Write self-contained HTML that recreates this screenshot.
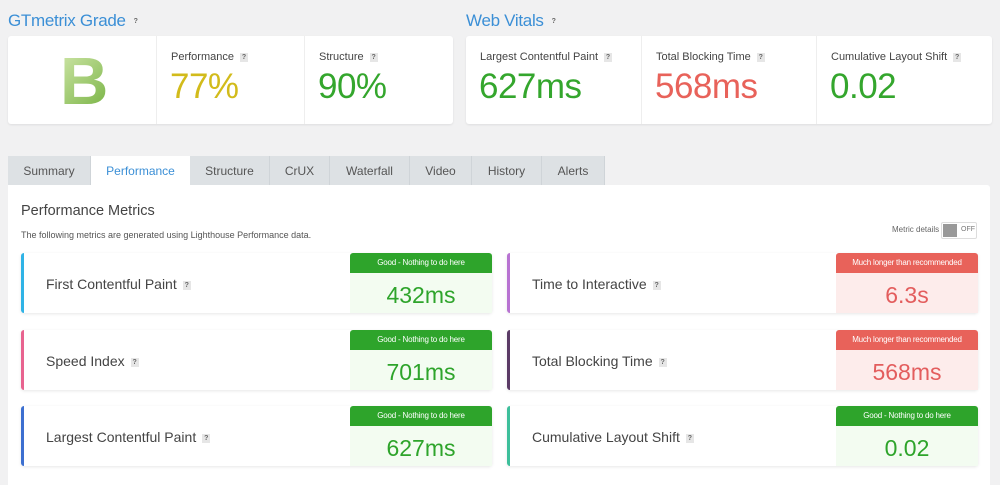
<!DOCTYPE html>
<html><head><style>
*{margin:0;padding:0;box-sizing:border-box}
body{width:1000px;height:477px;background:#f1f1f2;font-family:"Liberation Sans",sans-serif;position:relative;overflow:hidden;color:#444}
.a{position:absolute}
.h{color:#3b8fd6;font-size:17px;letter-spacing:-0.3px}
.q{display:inline-block;width:8px;height:9px;background:#e6e6e6;color:#666;font-size:7px;line-height:9px;text-align:center;font-weight:bold;vertical-align:middle;margin-left:6px}
.card{background:#fff;border-radius:3px;box-shadow:0 1px 2px rgba(0,0,0,.08)}
.sec{position:absolute;top:0;height:88px;border-left:1px solid #eee}
.lbl{position:absolute;left:14px;top:15px;font-size:11px;color:#444}
.val{position:absolute;left:13px;top:31px;font-size:35px;letter-spacing:-0.5px}
.tab{position:absolute;top:156px;height:29px;background:#dde1e4;border-right:1px solid #cfd4d8;font-size:12px;color:#555;text-align:center;line-height:30px}
.m{position:absolute;width:471px;height:60px;background:#fff;border-radius:3px;box-shadow:0 1px 3px rgba(0,0,0,.1);border-left:3px solid}
.m .t{position:absolute;left:22px;top:23px;font-size:14px;color:#444}
.b{position:absolute;right:0;top:0;width:142px;height:60px}
.b .bh{height:20px;color:#fff;font-size:8px;text-align:center;line-height:20px;border-radius:3px 3px 0 0;letter-spacing:-0.2px}
.b .bv{height:40px;font-size:23px;text-align:center;line-height:44px}
.g .bh{background:#2ea42b}.g .bv{background:#f3fcf1;color:#2ea42b}
.r .bh{background:#e8625a}.r .bv{background:#fdeceb;color:#e35d5d}
</style></head><body>
<div class="a h" style="left:8px;top:11px">GTmetrix Grade<span class="q" style="background:none">?</span></div>
<div class="a h" style="left:466px;top:11px">Web Vitals<span class="q" style="background:none">?</span></div>

<div class="a card" style="left:8px;top:36px;width:445px;height:88px">
 <div class="a" style="left:52px;top:7px;font-size:67px;font-weight:bold;background:linear-gradient(135deg,#d6eab0,#6fae3a);-webkit-background-clip:text;color:transparent">B</div>
 <div class="sec" style="left:148px;width:148px"><div class="lbl">Performance<span class="q">?</span></div><div class="val" style="color:#d2bb1b">77%</div></div>
 <div class="sec" style="left:296px;width:149px"><div class="lbl">Structure<span class="q">?</span></div><div class="val" style="color:#34a62d">90%</div></div>
</div>
<div class="a card" style="left:466px;top:36px;width:526px;height:88px">
 <div class="sec" style="left:0;width:175px;border:none"><div class="lbl">Largest Contentful Paint<span class="q">?</span></div><div class="val" style="color:#34a62d">627ms</div></div>
 <div class="sec" style="left:175px;width:175px"><div class="lbl">Total Blocking Time<span class="q">?</span></div><div class="val" style="color:#e8625a">568ms</div></div>
 <div class="sec" style="left:350px;width:176px"><div class="lbl">Cumulative Layout Shift<span class="q">?</span></div><div class="val" style="color:#34a62d">0.02</div></div>
</div>

<div class="tab" style="left:8px;width:83px">Summary</div>
<div class="tab" style="left:91px;width:99px;background:#fff;color:#3b8fd6;border:none">Performance</div>
<div class="tab" style="left:190px;width:80px">Structure</div>
<div class="tab" style="left:270px;width:60px">CrUX</div>
<div class="tab" style="left:330px;width:80px">Waterfall</div>
<div class="tab" style="left:410px;width:62px">Video</div>
<div class="tab" style="left:472px;width:70px">History</div>
<div class="tab" style="left:542px;width:63px">Alerts</div>

<div class="a" style="left:8px;top:185px;width:982px;height:300px;background:#fff;border-radius:0 3px 0 0"></div>
<div class="a" style="left:21px;top:203px;font-size:14.5px;color:#444">Performance Metrics</div>
<div class="a" style="left:21px;top:230px;font-size:9px;color:#555">The following metrics are generated using Lighthouse Performance data.</div>
<div class="a" style="left:892px;top:225px;font-size:8px;color:#666">Metric details</div>
<div class="a" style="left:941px;top:222px;width:36px;height:17px;border:1px solid #ddd;border-radius:2px;background:#fff"><div style="position:absolute;left:1px;top:1px;width:14px;height:13px;background:#999"></div><div style="position:absolute;left:19px;top:3px;font-size:7px;color:#777">OFF</div></div>

<div class="m" style="left:21px;top:253px;border-color:#2fb3e6"><div class="t">First Contentful Paint<span class="q">?</span></div><div class="b g"><div class="bh">Good - Nothing to do here</div><div class="bv">432ms</div></div></div>
<div class="m" style="left:21px;top:330px;border-color:#e8638f"><div class="t">Speed Index<span class="q">?</span></div><div class="b g"><div class="bh">Good - Nothing to do here</div><div class="bv">701ms</div></div></div>
<div class="m" style="left:21px;top:406px;border-color:#3c6fd0"><div class="t">Largest Contentful Paint<span class="q">?</span></div><div class="b g"><div class="bh">Good - Nothing to do here</div><div class="bv">627ms</div></div></div>
<div class="m" style="left:507px;top:253px;border-color:#b873d2"><div class="t">Time to Interactive<span class="q">?</span></div><div class="b r"><div class="bh">Much longer than recommended</div><div class="bv">6.3s</div></div></div>
<div class="m" style="left:507px;top:330px;border-color:#5b3b66"><div class="t">Total Blocking Time<span class="q">?</span></div><div class="b r"><div class="bh">Much longer than recommended</div><div class="bv">568ms</div></div></div>
<div class="m" style="left:507px;top:406px;border-color:#3dbf9b"><div class="t">Cumulative Layout Shift<span class="q">?</span></div><div class="b g"><div class="bh">Good - Nothing to do here</div><div class="bv">0.02</div></div></div>
</body></html>
